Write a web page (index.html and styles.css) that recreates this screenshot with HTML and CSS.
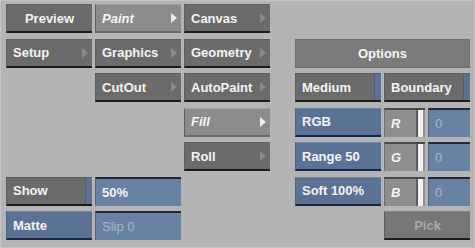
FILE: index.html
```html
<!DOCTYPE html>
<html lang="en">
<head>
    <meta charset="UTF-8">
    <title>Paint Menu</title>
    <link rel="stylesheet" href="styles.css">
</head>
<body>
    <div class="panel">
        <div class="btn center r1 c1">Preview</div>
        <div class="btn light italic r1 c2">Paint<span class="arrow"></span></div>
        <div class="btn r1 c3">Canvas<span class="arrow"></span></div>

        <div class="btn r2 c1">Setup<span class="arrow"></span></div>
        <div class="btn r2 c2">Graphics<span class="arrow"></span></div>
        <div class="btn r2 c3">Geometry<span class="arrow"></span></div>
        <div class="header r2 c5-7">Options</div>

        <div class="btn r3 c2">CutOut<span class="arrow"></span></div>
        <div class="btn r3 c3">AutoPaint<span class="arrow"></span></div>
        <div class="btn r3 c5">Medium<span class="stripe"></span></div>
        <div class="btn r3 c6-7">Boundary<span class="stripe"></span></div>

        <div class="btn light italic r4 c3">Fill<span class="arrow"></span></div>
        <div class="btn blue r4 c5">RGB</div>
        <div class="slot r4 c6">R<span class="bar"></span></div>
        <div class="field r4 c7">0</div>

        <div class="btn r5 c3">Roll<span class="arrow"></span></div>
        <div class="btn blue r5 c5">Range 50</div>
        <div class="slot r5 c6">G<span class="bar"></span></div>
        <div class="field r5 c7">0</div>

        <div class="btn r6 c1">Show<span class="stripe"></span></div>
        <div class="field bright r6 c2">50%</div>
        <div class="btn blue r6 c5">Soft 100%</div>
        <div class="slot r6 c6">B<span class="bar"></span></div>
        <div class="field r6 c7">0</div>

        <div class="btn blue r7 c1">Matte</div>
        <div class="field r7 c2">Slip 0</div>
        <div class="btn dim center r7 c6-7">Pick</div>
    </div>
</body>
</html>
```

FILE: styles.css
```css
body {
    margin: 0;
    background-color: #b4b4b4;
    font-family: "Liberation Sans", Arial, sans-serif;
    font-weight: bold;
    font-size: 13px;
    color: #f4f4f4;
}
.panel {
    width: 475px;
    height: 248px;
    box-sizing: border-box;
    border: 1px solid #c4c4c4;
    padding: 3px 0 0 5px;
    display: grid;
    grid-template-columns: 86px 86px 86px 19px 86px 41px 42px;
    grid-template-rows: repeat(7, 29px);
    column-gap: 3px;
    row-gap: 5.5px;
}

/* grid placement */
.r1 { grid-row: 1; }
.r2 { grid-row: 2; }
.r3 { grid-row: 3; }
.r4 { grid-row: 4; }
.r5 { grid-row: 5; }
.r6 { grid-row: 6; }
.r7 { grid-row: 7; }
.c1 { grid-column: 1; }
.c2 { grid-column: 2; }
.c3 { grid-column: 3; }
.c5 { grid-column: 5; }
.c6 { grid-column: 6; }
.c7 { grid-column: 7; }
.c5-7 { grid-column: 5 / 8; }
.c6-7 { grid-column: 6 / 8; }

/* buttons */
.btn {
    display: flex;
    align-items: center;
    padding-left: 6px;
    background-color: #6b6b6b;
    border-top: 1px solid #5e5e5e;
    border-left: 1px solid #5e5e5e;
    border-bottom: 2px solid #1c1c1c;
    box-sizing: border-box;
}
.btn.center {
    justify-content: center;
    padding-left: 0;
}
.btn.light {
    background-color: #8c8c8c;
    border-bottom-color: #6a6a6a;
    border-top-color: #a0a0a0;
}
.italic {
    font-style: italic;
}
.btn.blue {
    background-color: #5a7294;
    border-top-color: #6c84a4;
    border-left-color: #4c6484;
    border-bottom-color: #1b2740;
}
.btn.dim {
    background-color: #767676;
    color: #a9a9a9;
    border-top-color: #858585;
}
.arrow {
    margin-left: auto;
    margin-right: 4px;
    width: 0;
    height: 0;
    border-top: 5px solid transparent;
    border-bottom: 5px solid transparent;
    border-left: 6px solid #8a8a8a;
}
.light .arrow {
    border-left-color: #ececec;
}
.stripe {
    margin-left: auto;
    align-self: stretch;
    width: 6px;
    background-color: #5a7294;
    border-left: 1px solid #4a5e7c;
}

/* header */
.header {
    display: flex;
    align-items: center;
    justify-content: center;
    background-color: #7b7b7b;
    border: 1px solid #6f6f6f;
    box-sizing: border-box;
}

/* value fields */
.field {
    display: flex;
    align-items: center;
    padding-left: 6px;
    background-color: #6882a3;
    color: #a8b6c8;
    font-weight: normal;
    border-top: 2px solid #1e2838;
    border-left: 1px solid #4e6482;
    box-sizing: border-box;
}
.field.bright {
    color: #f4f4f4;
    font-weight: bold;
}
.slot {
    display: flex;
    align-items: center;
    padding-left: 6px;
    background-color: #8e8e8e;
    font-style: italic;
    border-top: 2px solid #4a4a4a;
    border-left: 1px solid #6e6e6e;
    box-sizing: border-box;
}
.bar {
    margin-left: auto;
    margin-right: 2px;
    align-self: stretch;
    width: 5px;
    background-color: #f2f2f2;
    border-left: 2px solid #5c5c5c;
}
```
